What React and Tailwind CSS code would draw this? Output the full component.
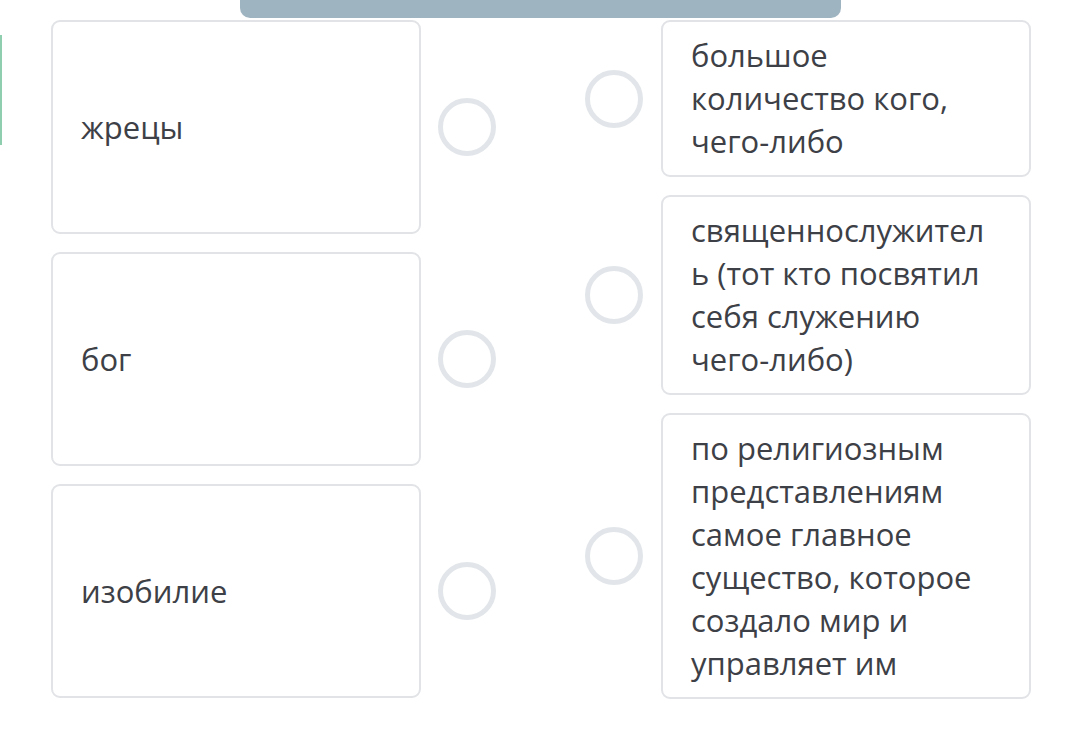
const leftItems = ['жрецы', 'бог', 'изобилие']

const rightItems = [
  'большое количество кого, чего-либо',
  'священнослужитель (тот кто посвятил себя служению чего-либо)',
  'по религиозным представлениям самое главное существо, которое создало мир и управляет им',
]

function Dot() {
  return <div className="w-[58px] h-[58px] shrink-0 rounded-full border-[5px] border-[#e2e6ea]" />
}

export default function App() {
  return (
    <div
      className="w-[1080px] h-[746px] bg-white overflow-hidden text-[#3d4046]"
      style={{ fontFamily: '"Open Sans", "Noto Sans", sans-serif' }}
    >
      {/* top bar */}
      <div className="ml-[240px] w-[601px] h-[18px] rounded-b-[10px] bg-[#9fb4c1]" />

      <div className="flex mt-[2px]">
        <div className="w-[2px] h-[110px] mt-[15px] bg-[#8fcfb0] shrink-0" />

        {/* left column */}
        <div className="ml-[49px] h-[678px] flex flex-col gap-[18px]">
          {leftItems.map((t) => (
            <div key={t} className="flex-1 flex items-center gap-[17px]">
              <div className="w-[370px] h-full flex items-center px-[28px] rounded-[9px] border-2 border-[#e1e3e6] text-[31px] leading-[43px]">
                {t}
              </div>
              <Dot />
            </div>
          ))}
        </div>

        {/* right column */}
        <div className="ml-[89px] flex flex-col gap-[18px]">
          {rightItems.map((t) => (
            <div key={t} className="flex items-center gap-[18px]">
              <Dot />
              <div className="w-[370px] pl-[28px] pr-[32px] py-[12px] rounded-[9px] border-2 border-[#e1e3e6] text-[31px] leading-[43px] break-words">
                {t}
              </div>
            </div>
          ))}
        </div>
      </div>
    </div>
  )
}
